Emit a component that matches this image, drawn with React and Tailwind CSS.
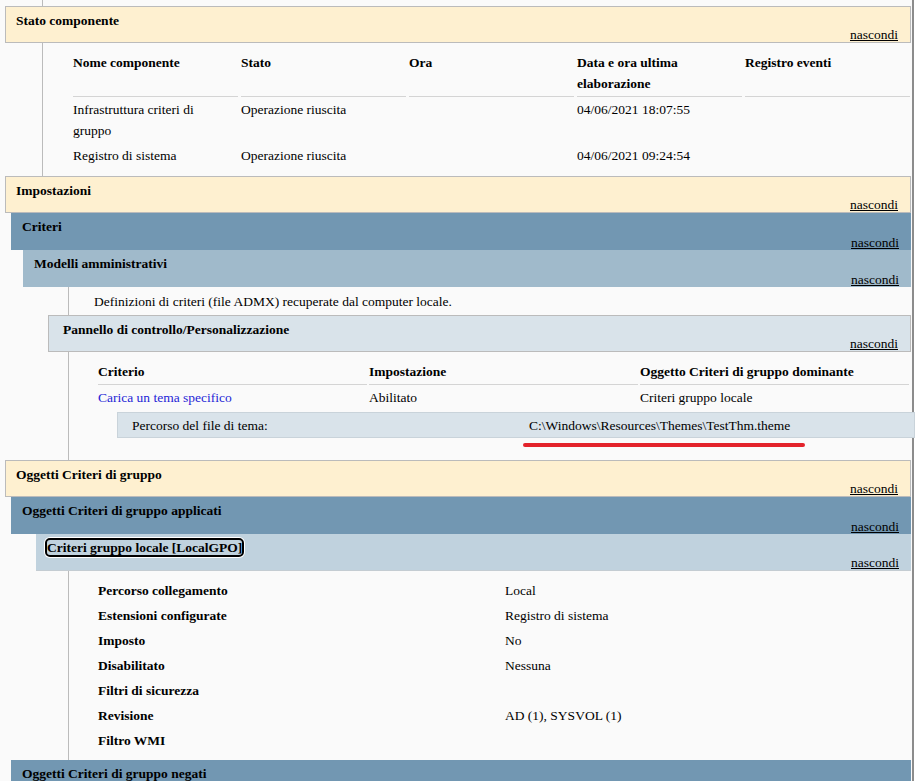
import React from 'react';

// Section header bar: title at top-left, "nascondi" link at bottom-right
function Header({ title, className, focused }) {
  return (
    <div className={`flex justify-between h-[37px] mr-[1px] ${className}`}>
      <span className="self-start pt-[6px] font-bold leading-[16px] whitespace-nowrap">
        {focused ? (
          <span className="rounded-[3px] outline-2 outline-black shadow-[0_0_0_3px_#ffffff]">{title}</span>
        ) : (
          title
        )}
      </span>
      <span className="self-end pb-[1px] pr-[12px] leading-[12px]">
        <a href="#" className="underline text-black">nascondi</a>
      </span>
    </div>
  );
}

const he0 = 'ml-[5px] bg-[#FEF0D0] border border-[#bbbbbb] pl-[10px]';
const he1 = 'ml-[11px] bg-[#7297B2] pl-[11px]';
const he2 = 'ml-[23px] bg-[#A0BACB] pl-[11px]';
const he3 = 'ml-[36px] bg-[#C0D2DE] border-b border-[#c4ccd2] pl-[11px]';
const he4 = 'ml-[48px] bg-[#D9E3EA] border border-[#bbbbbb] pl-[14px]';

const gpoRows = [
  ['Percorso collegamento', 'Local'],
  ['Estensioni configurate', 'Registro di sistema'],
  ['Imposto', 'No'],
  ['Disabilitato', 'Nessuna'],
  ['Filtri di sicurezza', ''],
  ['Revisione', 'AD (1), SYSVOL (1)'],
  ['Filtro WMI', ''],
];

export default function App() {
  return (
    <div className="w-[919px] h-[781px] overflow-hidden bg-white flex font-['Liberation_Serif',serif] text-[13.5px] text-black">
      <div className="w-[912px] shrink-0 bg-[#fafafa]">
        {/* tail of the previous section */}
        <div className="h-[6px] ml-[42px] border-l border-[#bbbbbb]" />

        <Header title="Stato componente" className={he0} />
        <div className="ml-[42px] border-l border-[#bbbbbb] pl-[30px] pt-[7px] pb-[8px]">
          <div className="grid grid-cols-[165px_165px_165px_165px_165px] gap-x-[3px] leading-[21px]">
            <div className="font-bold py-[2px] border-b border-[#d4d4d4]">Nome componente</div>
            <div className="font-bold py-[2px] border-b border-[#d4d4d4]">Stato</div>
            <div className="font-bold py-[2px] border-b border-[#d4d4d4]">Ora</div>
            <div className="font-bold py-[2px] border-b border-[#d4d4d4]">
              Data e ora ultima
              <br />
              elaborazione
            </div>
            <div className="font-bold py-[2px] border-b border-[#d4d4d4]">Registro eventi</div>

            <div className="py-[2px]">
              Infrastruttura criteri di
              <br />
              gruppo
            </div>
            <div className="py-[2px]">Operazione riuscita</div>
            <div className="py-[2px]" />
            <div className="py-[2px]">04/06/2021 18:07:55</div>
            <div className="py-[2px]" />

            <div className="py-[2px]">Registro di sistema</div>
            <div className="py-[2px]">Operazione riuscita</div>
            <div className="py-[2px]" />
            <div className="py-[2px]">04/06/2021 09:24:54</div>
            <div className="py-[2px]" />
          </div>
        </div>

        <Header title="Impostazioni" className={he0} />
        <Header title="Criteri" className={he1} />
        <Header title="Modelli amministrativi" className={he2} />
        <div className="ml-[68px] border-l border-[#bbbbbb] pl-[25px] h-[28px] flex items-center leading-[21px]">
          Definizioni di criteri (file ADMX) recuperate dal computer locale.
        </div>

        <Header title="Pannello di controllo/Personalizzazione" className={he4} />
        <div className="ml-[68px] border-l border-[#bbbbbb] pl-[29px] pt-[7px] pb-[13px]">
          <div className="grid grid-cols-[269px_269px_269px] gap-x-[2px] leading-[21px]">
            <div className="font-bold py-[2px] border-b border-[#d4d4d4]">Criterio</div>
            <div className="font-bold py-[2px] border-b border-[#d4d4d4]">Impostazione</div>
            <div className="font-bold py-[2px] border-b border-[#d4d4d4]">Oggetto Criteri di gruppo dominante</div>
            <div className="py-[2px] text-[#1f1fd6]">Carica un tema specifico</div>
            <div className="py-[2px]">Abilitato</div>
            <div className="py-[2px]">Criteri gruppo locale</div>
          </div>
          <div className="relative mt-[2px] ml-[19px] -mr-[3px] h-[26px] flex items-center bg-[#D9E3EA] border border-[#c9d3da] pl-[14px] leading-[21px]">
            <span className="w-[397px] shrink-0">Percorso del file di tema:</span>
            <span className="whitespace-nowrap">C:\Windows\Resources\Themes\TestThm.theme</span>
          </div>
          <div className="mt-[5px] ml-[425px] w-[282px] h-[4px] rounded-full bg-[#e3232b]" />
        </div>

        <Header title="Oggetti Criteri di gruppo" className={he0} />
        <Header title="Oggetti Criteri di gruppo applicati" className={he1} />
        <Header title="Criteri gruppo locale [LocalGPO]" className={he3} focused />
        <div className="ml-[68px] border-l border-[#bbbbbb] pl-[29px] pt-[7px] pb-[7px]">
          <div className="grid grid-cols-[407px_1fr] leading-[25px]">
            {gpoRows.map(([label, value]) => (
              <React.Fragment key={label}>
                <div className="font-bold">{label}</div>
                <div>{value}</div>
              </React.Fragment>
            ))}
          </div>
        </div>

        <Header title="Oggetti Criteri di gruppo negati" className={he1} />
      </div>
      <div className="w-[2px] shrink-0 bg-[#8c8c8c]" />
      <div className="flex-1 bg-white" />
    </div>
  );
}
